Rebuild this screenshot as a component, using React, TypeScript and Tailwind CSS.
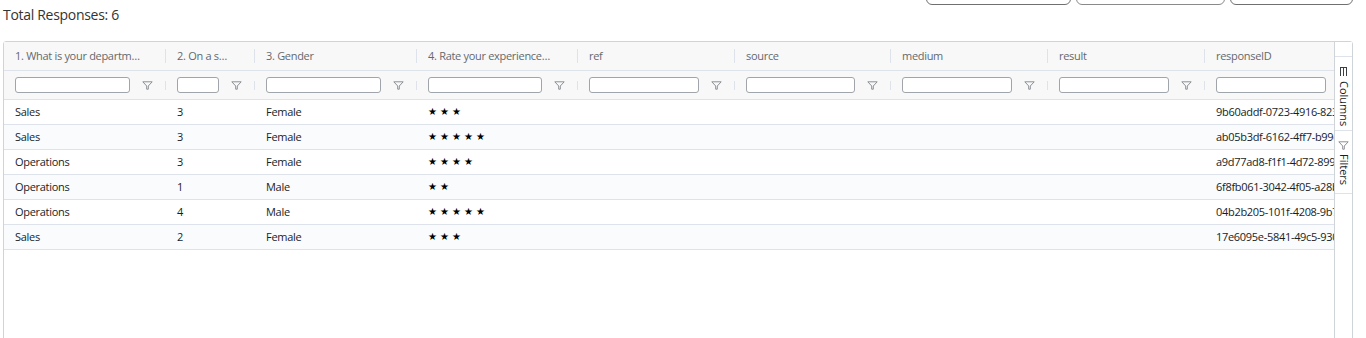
import React from 'react';

const columns = [
  { title: '1. What is your departm…', width: 162 },
  { title: '2. On a s…', width: 89 },
  { title: '3. Gender', width: 162 },
  { title: '4. Rate your experience…', width: 161 },
  { title: 'ref', width: 157 },
  { title: 'source', width: 156 },
  { title: 'medium', width: 157 },
  { title: 'result', width: 157 },
  { title: 'responseID', width: 157 },
];

const rows = [
  { dept: 'Sales', scale: '3', gender: 'Female', stars: 3, id: '9b60addf-0723-4916-823a-5c1e7f0b9d42' },
  { dept: 'Sales', scale: '3', gender: 'Female', stars: 5, id: 'ab05b3df-6162-4ff7-b99e-2d7a4c8f1e06' },
  { dept: 'Operations', scale: '3', gender: 'Female', stars: 4, id: 'a9d77ad8-f1f1-4d72-8993-e41c0b6d5a77' },
  { dept: 'Operations', scale: '1', gender: 'Male', stars: 2, id: '6f8fb061-3042-4f05-a28b-93de17c4f2a0' },
  { dept: 'Operations', scale: '4', gender: 'Male', stars: 5, id: '04b2b205-101f-4208-9b7c-6a0f5e3d81cb' },
  { dept: 'Sales', scale: '2', gender: 'Female', stars: 3, id: '17e6095e-5841-49c5-930d-b8a27f4e60d9' },
];

const FilterIcon = ({ className = '' }: { className?: string }) => (
  <svg width="11" height="9" viewBox="0 0 11 9" fill="none" className={className}>
    <path d="M0.8 0.8h9.4L6.3 5v3.2H4.7V5Z" stroke="#8c9196" strokeWidth="1" strokeLinejoin="round" />
  </svg>
);

const ColumnsIcon = () => (
  <svg width="9" height="9" viewBox="0 0 9 9" fill="none">
    <path d="M1 0.5h7M1.5 1v8M4.5 1v8M7.5 1v8" stroke="#3a3f44" strokeWidth="1" />
  </svg>
);

const Stars = ({ count }: { count: number }) => (
  <div className="flex gap-[3px] text-[10px] leading-none tracking-normal text-black" style={{ fontFamily: '"DejaVu Sans", sans-serif' }}>
    {Array.from({ length: count }).map((_, i) => (
      <span key={i}>★</span>
    ))}
  </div>
);

export default function App() {
  return (
    <div
      className="h-[338px] overflow-hidden bg-white pl-[3px] text-[#181d1f]"
      style={{ fontFamily: '"Open Sans", "Noto Sans", sans-serif' }}
    >
      <div className="flex w-[1350px] flex-col">
        {/* Toolbar buttons (scrolled partly out of view) */}
        <div className="-mt-[31px] flex h-[36px] justify-end gap-[5px]">
          <button className="w-[145px] rounded-[6px] border border-[#707070] bg-white" />
          <button className="w-[149px] rounded-[6px] border border-[#8a8a8a] bg-white" />
          <button className="w-[123px] rounded-[6px] border border-[#707070] bg-white" />
        </div>

        <div className="text-[14px] leading-[20px] tracking-[-0.3px] text-[#333]">Total Responses: 6</div>

        {/* Grid */}
        <div className="mt-[16px] flex h-[320px] rounded-[3px] border border-[#cfd4d9] tracking-[-0.3px]">
          <div className="flex-1 overflow-hidden">
            <div className="flex h-[29px] w-max border-b border-[#dde2eb] bg-[#f8f8f8] text-[11px] text-[#64696d]">
              {columns.map((c) => (
                <div key={c.title} className="flex shrink-0 items-center pl-[11px]" style={{ width: c.width }}>
                  <span className="flex-1 truncate">{c.title}</span>
                  <span className="h-[14px] w-px bg-[#dde2eb]" />
                </div>
              ))}
            </div>
            <div className="flex h-[29px] w-max border-b border-[#dde2eb] bg-[#f8f8f8]">
              {columns.map((c) => (
                <div key={c.title} className="flex shrink-0 items-center pl-[11px]" style={{ width: c.width }}>
                  <div className="h-[16px] min-w-0 flex-1 rounded-[3px] border border-[#9fa5ab] bg-white" />
                  <FilterIcon className="ml-[12px] mr-[12px] shrink-0" />
                  <span className="h-[9px] w-px bg-[#dde2eb]" />
                </div>
              ))}
            </div>
            {rows.map((r, i) => (
              <div
                key={r.id}
                className={`flex h-[25px] w-max items-center border-b border-[#dde2eb] text-[11px] ${i % 2 === 1 ? 'bg-[#fafbfd]' : 'bg-white'}`}
              >
                <div className="w-[162px] shrink-0 pl-[11px]">{r.dept}</div>
                <div className="w-[89px] shrink-0 pl-[11px]">{r.scale}</div>
                <div className="w-[162px] shrink-0 pl-[11px]">{r.gender}</div>
                <div className="w-[161px] shrink-0 pl-[11px]">
                  <Stars count={r.stars} />
                </div>
                <div className="w-[157px] shrink-0" />
                <div className="w-[156px] shrink-0" />
                <div className="w-[157px] shrink-0" />
                <div className="w-[157px] shrink-0" />
                <div className="w-[157px] shrink-0 overflow-hidden whitespace-nowrap pl-[11px]">{r.id}</div>
              </div>
            ))}
          </div>

          {/* Side bar */}
          <div className="flex w-[18px] shrink-0 flex-col border-l border-[#cfd4d9] bg-white text-[11px] tracking-normal text-[#181d1f]">
            <div className="mt-[14px] flex h-[75px] flex-col items-center gap-[5px] border-y border-[#dde2eb] pt-[10px]">
              <ColumnsIcon />
              <span className="leading-[16px] [writing-mode:vertical-lr]">Columns</span>
            </div>
            <div className="flex h-[63px] flex-col items-center gap-[4px] border-b border-[#dde2eb] pt-[10px]">
              <FilterIcon />
              <span className="leading-[16px] [writing-mode:vertical-lr]">Filters</span>
            </div>
          </div>
        </div>
      </div>
    </div>
  );
}
